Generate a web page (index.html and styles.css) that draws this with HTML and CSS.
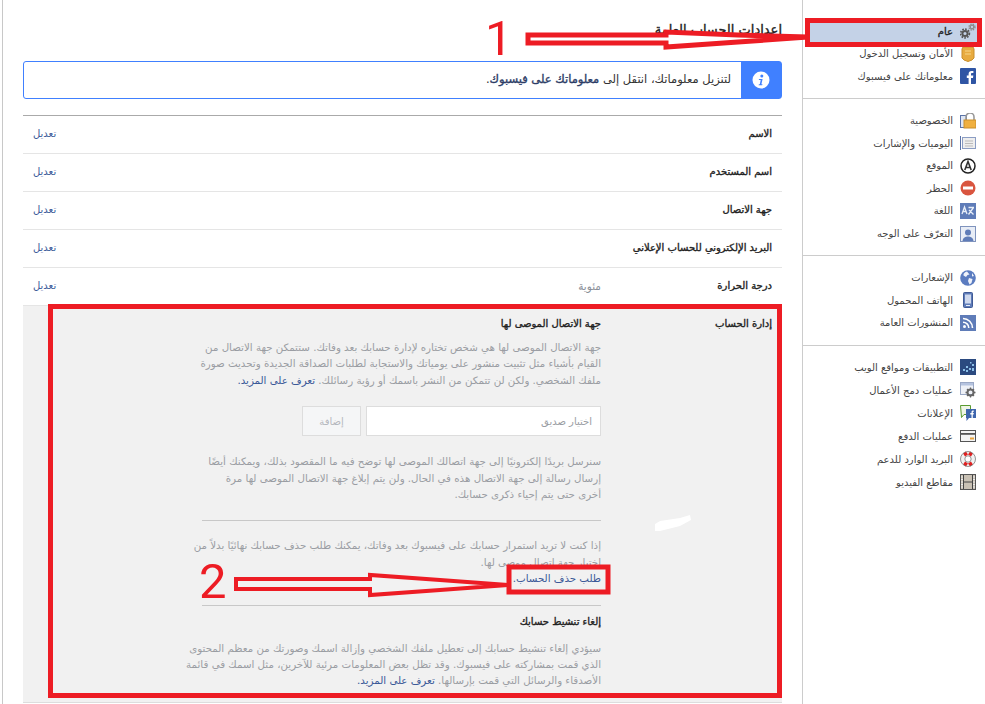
FILE: index.html
```html
<!DOCTYPE html>
<html lang="ar">
<head>
    <meta charset="UTF-8">
    <meta name="viewport" content="width=device-width, initial-scale=1.0">
    <title>إعدادات الحساب العامة</title>
    <link rel="stylesheet" href="styles.css">
</head>
<body>
<div class="page">
    <!-- المحتوى -->
    <main class="content" dir="rtl">
        <h1 class="page-title">إعدادات الحساب العامة</h1>

        <div class="notice">
            <div class="notice-icon">
                <svg width="18" height="18" viewBox="0 0 18 18"><circle cx="9" cy="9" r="8.5" fill="#fff"/><circle cx="9.8" cy="4.9" r="1.5" fill="#4080ff"/><path d="M7 8h3.6l-1.2 5.2h1.1l-.3 1H6.6l.3-1h.9L8.7 9H6.8z" fill="#4080ff"/></svg>
            </div>
            <p class="notice-text">لتنزيل معلوماتك، انتقل إلى <b>معلوماتك على فيسبوك</b>.</p>
        </div>

        <div class="settings">
            <div class="row"><span class="row-label">الاسم</span><span class="row-value"></span><a class="row-edit">تعديل</a></div>
            <div class="row"><span class="row-label">اسم المستخدم</span><span class="row-value"></span><a class="row-edit">تعديل</a></div>
            <div class="row"><span class="row-label">جهة الاتصال</span><span class="row-value"></span><a class="row-edit">تعديل</a></div>
            <div class="row"><span class="row-label">البريد الإلكتروني للحساب الإعلاني</span><span class="row-value"></span><a class="row-edit">تعديل</a></div>
            <div class="row"><span class="row-label">درجة الحرارة</span><span class="row-value">مئوية</span><a class="row-edit">تعديل</a></div>

            <section class="manage">
                <h2 class="manage-label">إدارة الحساب</h2>
                <div class="manage-body">
                    <h3 class="manage-title">جهة الاتصال الموصى لها</h3>
                    <p class="manage-text">جهة الاتصال الموصى لها هي شخص تختاره لإدارة حسابك بعد وفاتك. ستتمكن جهة الاتصال من<br>القيام بأشياء مثل تثبيت منشور على يومياتك والاستجابة لطلبات الصداقة الجديدة وتحديث صورة<br>ملفك الشخصي. ولكن لن تتمكن من النشر باسمك أو رؤية رسائلك. <a>تعرف على المزيد.</a></p>
                    <div class="friend-form">
                        <input class="friend-input" type="text" placeholder="اختيار صديق">
                        <button class="friend-add" type="button">إضافة</button>
                    </div>
                    <p class="manage-text">سنرسل بريدًا إلكترونيًا إلى جهة اتصالك الموصى لها توضح فيه ما المقصود بذلك، ويمكنك أيضًا<br>إرسال رسالة إلى جهة الاتصال هذه في الحال. ولن يتم إبلاغ جهة الاتصال الموصى لها مرة<br>أخرى حتى يتم إحياء ذكرى حسابك.</p>
                    <hr class="manage-line first-line">
                    <p class="manage-text">إذا كنت لا تريد استمرار حسابك على فيسبوك بعد وفاتك، يمكنك طلب حذف حسابك نهائيًا بدلاً من<br>اختيار جهة اتصال موصى لها.<br><a>طلب حذف الحساب.</a></p>
                    <hr class="manage-line second-line">
                    <h3 class="manage-title second-title">إلغاء تنشيط حسابك</h3>
                    <p class="manage-text">سيؤدي إلغاء تنشيط حسابك إلى تعطيل ملفك الشخصي وإزالة اسمك وصورتك من معظم المحتوى<br>الذي قمت بمشاركته على فيسبوك. وقد تظل بعض المعلومات مرئية للآخرين، مثل اسمك في قائمة<br>الأصدقاء والرسائل التي قمت بإرسالها. <a>تعرف على المزيد.</a></p>
                </div>
            </section>
        </div>
    </main>

    <!-- القائمة الجانبية -->
    <nav class="sidebar" dir="rtl">
        <ul class="menu">
            <li class="menu-item active"><svg class="ico" viewBox="0 0 16 16"><circle cx="5" cy="10.5" r="4.4" fill="none" stroke="#555" stroke-width="1.6" stroke-dasharray="1.7 1.2"/><circle cx="5" cy="10.500" r="2.6" fill="none" stroke="#555" stroke-width="2"/><circle cx="12" cy="4" r="3" fill="none" stroke="#8a8a8a" stroke-width="1.3" stroke-dasharray="1.4 1"/><circle cx="12" cy="4" r="1.800" fill="none" stroke="#8a8a8a" stroke-width="1.300"/></svg>عام</li>
            <li class="menu-item"><svg class="ico" viewBox="0 0 16 16"><path d="M3 1h10l1 2v9l-2 2-4 1.500L4 14l-2-2V3z" fill="#e8ab3f" stroke="#c98f2c"/><path d="M5 5h6M5 8h6" stroke="#f7d78a"/></svg>الأمان وتسجيل الدخول</li>
            <li class="menu-item"><svg class="ico" viewBox="0 0 16 16"><rect width="16" height="16" rx="1" fill="#2f55a4"/><path d="M11 16V10h2l.3-2.400H11V6.200c0-.7.3-1.100 1.100-1.100h1.300V3c-.5-.1-1.100-.1-1.800-.1-1.800 0-3 1.100-3 3.100v1.600H6.800V10h1.800v6z" fill="#fff"/></svg>معلوماتك على فيسبوك</li>
        </ul>
        <ul class="menu">
            <li class="menu-item"><svg class="ico" viewBox="0 0 16 16"><rect x=".5" y="2.500" width="6" height="12" fill="#dfe6f3" stroke="#5b74a8"/><path d="M6 7V4a4 4 0 0 1 8 0v3" fill="none" stroke="#999" stroke-width="1.600"/><rect x="4" y="7" width="12" height="8" fill="#f0b040" stroke="#c98f2c"/></svg>الخصوصية</li>
            <li class="menu-item"><svg class="ico" viewBox="0 0 16 16"><path d="M.5 1v14" stroke="#5b74a8"/><rect x="2.500" y="2.500" width="13" height="11" fill="#eee" stroke="#8b9dc3"/><path d="M5 6h8M5 8.500h8M5 11h8" stroke="#bbb"/></svg>اليوميات والإشارات</li>
            <li class="menu-item"><svg class="ico" viewBox="0 0 16 16"><circle cx="8" cy="8" r="7" fill="#fff" stroke="#222" stroke-width="1.500"/><path d="M4.800 12 8 3.500 11.200 12M6 9.500h4" fill="none" stroke="#333" stroke-width="1.600"/></svg>الموقع</li>
            <li class="menu-item"><svg class="ico" viewBox="0 0 16 16"><circle cx="8" cy="8" r="7.500" fill="#d9553f"/><rect x="3" y="6.500" width="10" height="3" fill="#fff"/></svg>الحظر</li>
            <li class="menu-item"><svg class="ico" viewBox="0 0 16 16"><rect width="16" height="16" fill="#5f7cb8"/><path d="M2 11 4.500 4 7 11M3 8.500h3M8.500 4.500h5.500M8.500 11.500 13.500 4.500M9 7l4.500 4.500" fill="none" stroke="#e8eef8" stroke-width="1.300"/></svg>اللغة</li>
            <li class="menu-item"><svg class="ico" viewBox="0 0 16 16"><rect x=".5" y=".5" width="15" height="15" fill="#e8edf6" stroke="#7f93bd"/><circle cx="8" cy="6.500" r="3" fill="#5f7cb8"/><path d="M2.500 15c.5-3.500 3-4.500 5.500-4.500s5 1 5.500 4.500z" fill="#5f7cb8"/></svg>التعرّف على الوجه</li>
        </ul>
        <ul class="menu">
            <li class="menu-item"><svg class="ico" viewBox="0 0 16 16"><circle cx="8" cy="8" r="7.800" fill="#5b7cc0"/><path d="M7 1.500C5 2 3 3.500 3.500 5.500L6 7l1.500-2 2-.5zM9 8l3.500 1-1 4-2 1.500L8 11zM12 3l2 3-2 .5z" fill="#f0f3fa"/></svg>الإشعارات</li>
            <li class="menu-item"><svg class="ico" viewBox="0 0 16 16"><rect x="3.500" y=".5" width="9" height="15" rx="1" fill="#5f7cb8" stroke="#3f5a96"/><rect x="5" y="2.500" width="6" height="9" fill="#cfd9ee"/><path d="M6 13.500h4" stroke="#e8eef8"/></svg>الهاتف المحمول</li>
            <li class="menu-item"><svg class="ico" viewBox="0 0 16 16"><rect width="16" height="16" fill="#5f7cb8"/><circle cx="4.500" cy="11.500" r="1.500" fill="#fff"/><path d="M3 7.200a5.800 5.800 0 0 1 5.800 5.800M3 3.500A9.500 9.500 0 0 1 12.500 13" fill="none" stroke="#fff" stroke-width="1.600"/></svg>المنشورات العامة</li>
        </ul>
        <ul class="menu">
            <li class="menu-item"><svg class="ico" viewBox="0 0 16 16"><rect width="16" height="16" fill="#2b4a80"/><path d="M3 10h2v2H3zM6 7h2v2H6zM9 9h2v2H9zM12 5h2v2h-2zM10 3h1.500v1.500H10zM6 11h2v2H6zM12 9h2v3h-2z" fill="#8cc0e8"/></svg>التطبيقات ومواقع الويب</li>
            <li class="menu-item"><svg class="ico" viewBox="0 0 16 16"><rect x=".5" y=".5" width="13" height="12" fill="#eef1f7" stroke="#9aa8c5"/><path d="M1 1h12v2.500H1z" fill="#b5c3df"/><circle cx="10.500" cy="10.500" r="3" fill="none" stroke="#666" stroke-width="2"/><path d="M10.500 5.500v2M10.500 13.500v2M5.500 10.500h2M13.500 10.500h2M7 7l1.500 1.500M12.500 12.500 14 14M14 7l-1.500 1.500M8.500 12.500 7 14" stroke="#666" stroke-width="1.300"/></svg>عمليات دمج الأعمال</li>
            <li class="menu-item"><svg class="ico" viewBox="0 0 16 16"><path d="M.5.5h10v9H4L1.500 12.500z" fill="#eff5e6" stroke="#5a9a30"/><path d="M6 4h10v9H9l-2.500 3v-3H6z" fill="#3f66ad"/><path d="M11.500 13V9.500H10.300V8h1.200V7c0-1.200.7-1.700 2.300-1.500v1.300c-.7-.1-1 0-1 .6V8h1l-.2 1.500h-.8V13z" fill="#fff"/></svg>الإعلانات</li>
            <li class="menu-item"><svg class="ico" viewBox="0 0 16 16"><rect x=".5" y="2.500" width="15" height="11" fill="#f4f4f4" stroke="#555"/><rect x="1" y="5" width="14" height="1.800" fill="#555"/><rect x="10" y="9.500" width="4" height="2" fill="#e8a33c"/></svg>عمليات الدفع</li>
            <li class="menu-item"><svg class="ico" viewBox="0 0 16 16"><circle cx="8" cy="8" r="5.500" fill="none" stroke="#f2f2f2" stroke-width="4"/><path d="M4.500 1.500 6.500 4.500M11.500 1.500 9.500 4.500M4.500 14.500 6.500 11.500M11.500 14.500 9.500 11.500" stroke="#e02020" stroke-width="3.500"/><circle cx="8" cy="8" r="7.500" fill="none" stroke="#777" stroke-width=".8"/><circle cx="8" cy="8" r="3.200" fill="none" stroke="#777" stroke-width=".8"/></svg>البريد الوارد للدعم</li>
            <li class="menu-item"><svg class="ico" viewBox="0 0 16 16"><rect x=".5" y=".5" width="15" height="15" fill="#c9c1b4" stroke="#555"/><path d="M3.500 1v14M12.500 1v14M4 8h8" stroke="#444"/><path d="M1 3h2M1 5.500h2M1 8h2M1 10.500h2M1 13h2M13 3h2M13 5.500h2M13 8h2M13 10.500h2M13 13h2" stroke="#eee"/></svg>مقاطع الفيديو</li>
        </ul>
    </nav>

    <!-- التعليقات الحمراء فوق لقطة الشاشة -->
    <svg class="marks" width="985" height="704" viewBox="0 0 985 704">
        <path d="M655 524 660 521 680 518 690 515 691 520 680 526 660 531 655 531z" fill="#fff"/>
        <rect x="50.500" y="306.500" width="729" height="389" fill="none" stroke="#ed1c24" stroke-width="5"/>
        <rect x="807.500" y="20.500" width="172" height="24" fill="none" stroke="#ed1c24" stroke-width="5"/>
        <rect x="509" y="567" width="99" height="25" fill="none" stroke="#ed1c24" stroke-width="5"/>
        <path d="M528 35H666V32L738 35 808 37 738 42 666 47V43H528z" fill="#fff" stroke="#ed1c24" stroke-width="5"/>
        <path d="M236 579H370V575L440 580 508 585 440 590 370 595V589H236z" fill="#f2f2f2" stroke="#ed1c24" stroke-width="4"/>
        <text class="mark-num" x="485" y="55">1</text>
        <text class="mark-num" x="199" y="598">2</text>
    </svg>
</div>
</body>
</html>
```

FILE: styles.css
```css
* {
    box-sizing: border-box;
}
body {
    margin: 0;
    background-color: #fff;
    font-family: "DejaVu Sans", "Noto Sans", sans-serif;
    font-size: 10px;
    color: #333;
}
.page {
    position: relative;
    display: flex;
    width: 985px;
    height: 704px;
    overflow: hidden;
}
.content {
    flex: none;
    width: 801px;
    height: 704px;
    margin-left: 2px;
    padding: 21px 20px 0 20px;
    border-left: 1px solid #c8c8c8;
    border-right: 1px solid #ccc;
}
.page-title {
    margin: 0 0 22px;
    font-size: 13px;
    line-height: 18px;
    font-weight: normal;
    -webkit-text-stroke: .35px;
    color: #222;
}
.notice {
    display: flex;
    align-items: stretch;
    height: 38px;
    border: 1px solid #4080ff;
    border-radius: 3px;
    background-color: #fff;
}
.notice-icon {
    flex: none;
    width: 40px;
    display: flex;
    align-items: center;
    justify-content: center;
    background-color: #4080ff;
}
.notice-text {
    margin: 0;
    padding-right: 10px;
    font-size: 11.5px;
    line-height: 34px;
    color: #333;
}
.notice-text b {
    font-weight: normal;
    -webkit-text-stroke: .35px;
    color: #2b3c66;
}
.settings {
    margin-top: 16px;
    border-top: 1px solid #aaa;
}
.row {
    display: grid;
    grid-template-columns: 181px 1fr 60px;
    height: 38px;
    padding-bottom: 2px;
    align-items: center;
    border-bottom: 1px solid #e5e5e5;
}
.row-label {
    padding-right: 10px;
    white-space: nowrap;
    font-size: 10px;
    -webkit-text-stroke: .35px;
    color: #222;
}
.row-value {
    color: #8a8f99;
    font-size: 10.5px;
}
.row-edit,
.manage-text a {
    color: #3b5998;
}
.row-edit {
    font-size: 10px;
    padding-left: 10px;
    text-align: left;
}
.manage {
    display: grid;
    grid-template-columns: 181px 399px;
    height: 397px;
    padding-top: 10px;
    background-color: #f1f1f1;
    border-bottom: 1px solid #ddd;
}
.manage-label {
    margin: 0;
    padding-right: 10px;
    font-size: 10px;
    font-weight: normal;
    -webkit-text-stroke: .35px;
    line-height: 16px;
    color: #222;
}
.manage-title {
    margin: 0 0 7px;
    font-size: 10px;
    font-weight: normal;
    -webkit-text-stroke: .35px;
    line-height: 16px;
    color: #222;
}
.second-title {
    margin-bottom: 10px;
}
.manage-text {
    margin: 0;
    font-size: 10.25px;
    line-height: 16.4px;
    color: #9a9da3;
    white-space: nowrap;
}
.friend-form {
    display: flex;
    gap: 5px;
    height: 30px;
    margin: 18px 0 17px;
}
.friend-input {
    width: 235px;
    padding: 0 8px;
    border: 1px solid #ddd;
    background-color: #fff;
    font-family: inherit;
    font-size: 10px;
}
.friend-input::placeholder {
    color: #9a9da3;
}
.friend-add {
    width: 59px;
    border: 1px solid #ddd;
    background-color: #f5f6f7;
    color: #b5b8be;
    font-family: inherit;
    font-size: 10px;
}
.manage-line {
    height: 1px;
    border: 0;
    background-color: #c8c8c8;
}
.first-line {
    margin: 18px 0 16px;
}
.second-line {
    margin: 18px 0 8px;
}
.sidebar {
    flex: 1;
    padding-top: 20px;
}
.menu {
    margin: 0 0 10px;
    padding: 0 0 10.5px;
    list-style: none;
    border-bottom: 1px solid #ccc;
}
.menu:last-child {
    border-bottom: 0;
}
.menu-item {
    display: flex;
    align-items: center;
    gap: 7px;
    height: 22.6px;
    padding-right: 9px;
    font-size: 10px;
    color: #444;
    white-space: nowrap;
}
.menu:last-child .menu-item {
    height: 23px;
}
.menu-item.active {
    margin: 0 6px 0 5px;
    padding-right: 3px;
    background-color: #c4d2e7;
    -webkit-text-stroke: .35px;
    color: #222;
}
.ico {
    flex: none;
    width: 16px;
    height: 16px;
}
.marks {
    position: absolute;
    top: 0;
    left: 0;
}
.mark-num {
    font-family: Roboto, sans-serif;
    font-size: 49px;
    fill: #ed1c24;
}
```
